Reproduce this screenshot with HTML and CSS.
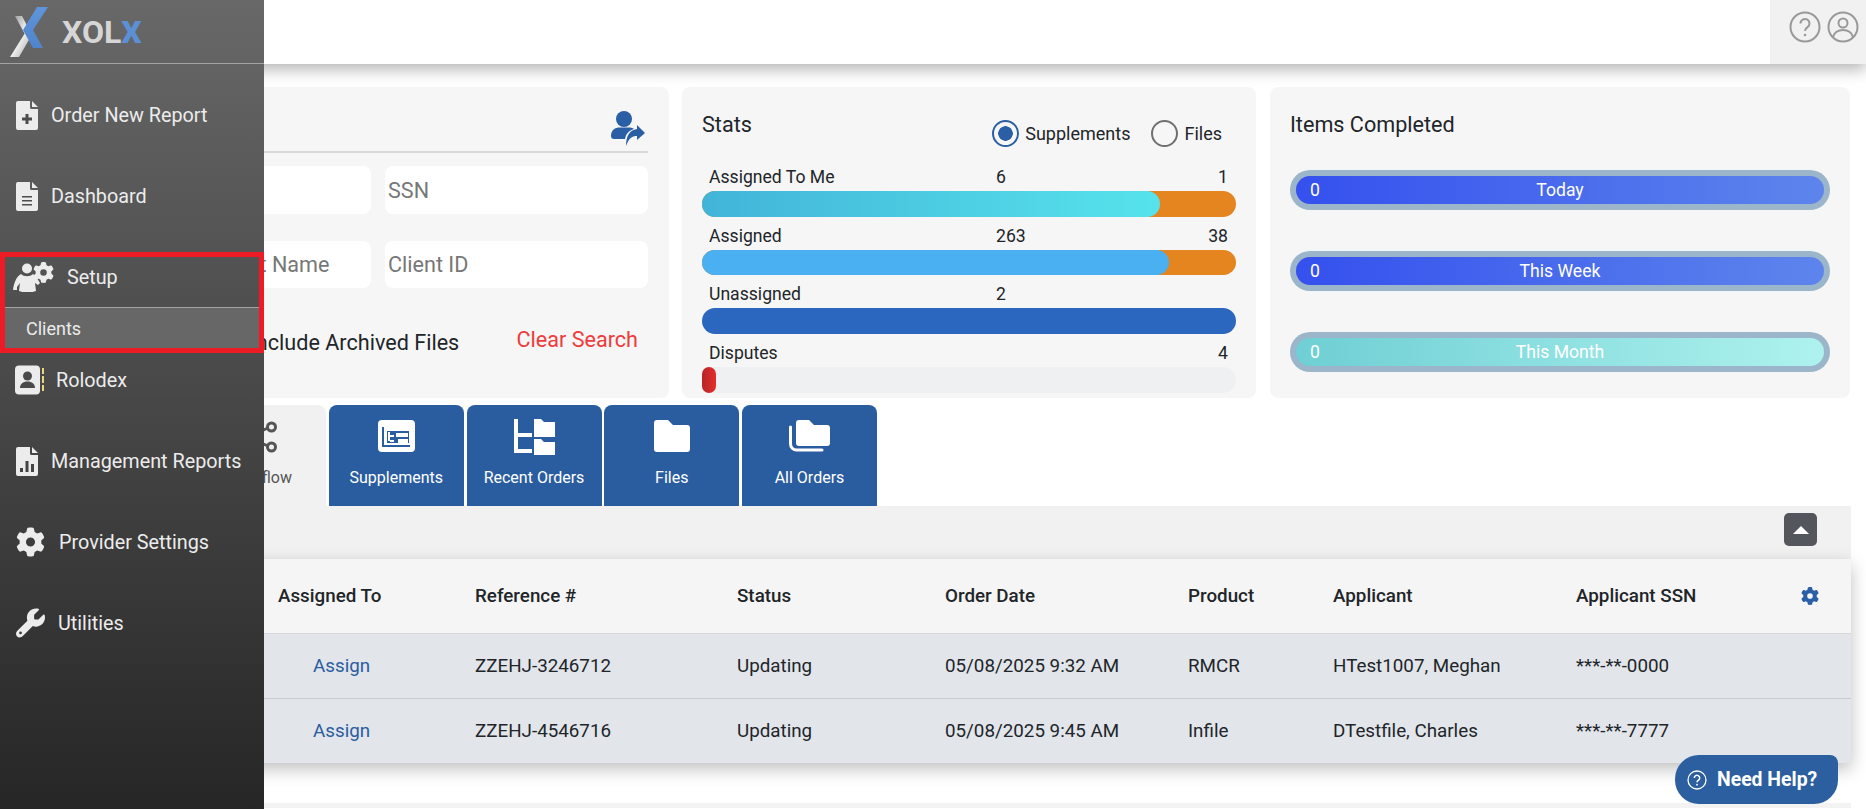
FILE: index.html
```html
<!DOCTYPE html>
<html lang="en">
<head>
<meta charset="utf-8">
<title>XOLX</title>
<link rel="stylesheet" href="styles.css">
</head>
<body>
<svg class="defs" width="0" height="0" aria-hidden="true">
  <defs>
    <symbol id="gear" viewBox="0 0 512 512"><path fill="currentColor" d="M495.9 166.6c3.2 8.7 .5 18.4-6.4 24.6l-43.3 39.4c1.1 8.3 1.7 16.8 1.7 25.4s-.6 17.1-1.7 25.4l43.3 39.4c6.9 6.2 9.6 15.9 6.4 24.6c-4.4 11.9-9.7 23.3-15.8 34.3l-4.7 8.1c-6.6 11-14 21.4-22.1 31.2c-5.9 7.2-15.7 9.6-24.5 6.8l-55.7-17.7c-13.4 10.3-28.2 18.9-44 25.4l-12.5 57.1c-2 9.1-9 16.3-18.2 17.8c-13.8 2.3-28 3.5-42.5 3.5s-28.7-1.2-42.5-3.5c-9.2-1.5-16.2-8.7-18.2-17.8l-12.5-57.1c-15.8-6.5-30.6-15.1-44-25.4L83.1 425.9c-8.8 2.8-18.6 .3-24.5-6.8c-8.1-9.8-15.5-20.2-22.1-31.2l-4.7-8.1c-6.1-11-11.4-22.4-15.8-34.3c-3.2-8.7-.5-18.4 6.4-24.6l43.3-39.4C64.6 273.1 64 264.6 64 256s.6-17.1 1.7-25.4L22.4 191.2c-6.9-6.2-9.6-15.9-6.4-24.6c4.4-11.9 9.7-23.3 15.8-34.3l4.7-8.1c6.6-11 14-21.4 22.1-31.2c5.9-7.2 15.7-9.6 24.5-6.8l55.7 17.7c13.4-10.3 28.2-18.9 44-25.4l12.5-57.1c2-9.1 9-16.3 18.2-17.8C227.3 1.2 241.5 0 256 0s28.7 1.2 42.5 3.5c9.2 1.5 16.2 8.7 18.2 17.8l12.5 57.1c15.8 6.5 30.6 15.1 44 25.4l55.7-17.7c8.8-2.8 18.6-.3 24.5 6.8c8.1 9.8 15.5 20.2 22.1 31.2l4.7 8.1c6.1 11 11.4 22.4 15.8 34.3zM256 336a80 80 0 1 0 0-160 80 80 0 1 0 0 160z"/></symbol>
    <linearGradient id="silver" x1="0" y1="0" x2="1" y2="1"><stop offset="0" stop-color="#8c8c8c"/><stop offset=".5" stop-color="#f2f2f2"/><stop offset="1" stop-color="#9a9a9a"/></linearGradient>
    <linearGradient id="logoblue" x1="0" y1="0" x2="0" y2="1"><stop offset="0" stop-color="#5f95da"/><stop offset="1" stop-color="#4f84cc"/></linearGradient>
  </defs>
</svg>

<aside class="sidebar">
  <div class="brand">
    <svg class="logo" viewBox="0 0 48 54" width="48" height="54">
      <path fill="url(#silver)" d="M14 12h7l11 21-6 1zM24 29l5 5L18 53H9z"/>
      <path fill="url(#logoblue)" d="M36 3h11L32 26l10 18H32L22 26z"/>
    </svg>
    <span class="brand-name">XOL<b>X</b></span>
  </div>
  <nav class="nav">
    <a class="nav-item nav-gap">
      <span class="nav-icon"><svg viewBox="0 0 22 29" width="22" height="29"><path fill="#ececec" d="M2 0h12v6.500a1.500 1.500 0 0 0 1.500 1.500H22v19a2 2 0 0 1-2 2H2a2 2 0 0 1-2-2V2a2 2 0 0 1 2-2zM16 0l6 6h-6z"/><path fill="#4d4d4d" d="M9.500 13h3v3.500H16v3h-3.500V23h-3v-3.500H6v-3h3.500z"/></svg></span>
      <span class="label-order">Order New Report</span>
    </a>
    <a class="nav-item nav-gap">
      <span class="nav-icon"><svg viewBox="0 0 22 29" width="22" height="29"><path fill="#ececec" d="M2 0h12v6.500a1.500 1.500 0 0 0 1.500 1.500H22v19a2 2 0 0 1-2 2H2a2 2 0 0 1-2-2V2a2 2 0 0 1 2-2zM16 0l6 6h-6z"/><path fill="#4d4d4d" d="M6 14h10v1.600H6zM6 18h10v1.600H6zM6 22h10v1.600H6z"/></svg></span>
      <span class="label-order">Dashboard</span>
    </a>
    <div class="nav-group nav-gap-none">
      <a class="nav-item">
        <span class="nav-icon nav-icon-wide"><svg viewBox="0 0 41 30" width="41" height="30"><circle cx="14" cy="6.500" r="5" fill="#ececec"/><path fill="#ececec" d="M0 28c1-8 4-14 8-16 3 3 9 3 12 0 3 2 5 6 7 9l-2 2-3-2 1 8c-5 2-12 2-17 0l1-8-3 4v3z"/><use href="#gear" x="20" y="0" width="21" height="21" class="setup-gear"/></svg></span>
        <span class="label-setup">Setup</span>
      </a>
      <a class="nav-sub">Clients</a>
      <span class="highlight"></span>
    </div>
    <a class="nav-item nav-gap nav-item-after">
      <span class="nav-icon"><svg viewBox="0 0 30 30" width="30" height="30"><rect width="25" height="29" y=".5" rx="4" fill="#ececec"/><path fill="#e8d878" d="M27 3h2v6h-2zM27 11h2v7h-2zM27 20h2v6h-2z"/><circle cx="12.500" cy="11" r="4.500" fill="#4a4a4a"/><path fill="#4a4a4a" d="M5 23c0-4 3-6.500 7.500-6.500S20 19 20 23z"/></svg></span>
      <span class="label-rolodex">Rolodex</span>
    </a>
    <a class="nav-item nav-gap">
      <span class="nav-icon"><svg viewBox="0 0 22 29" width="22" height="29"><path fill="#ececec" d="M2 0h12v6.500a1.500 1.500 0 0 0 1.500 1.500H22v19a2 2 0 0 1-2 2H2a2 2 0 0 1-2-2V2a2 2 0 0 1 2-2zM16 0l6 6h-6z"/><path fill="#444" d="M4 21h3v4H4zM9.500 14h3v11h-3zM15 17h3v8h-3z"/></svg></span>
      <span class="label-order">Management Reports</span>
    </a>
    <a class="nav-item nav-gap">
      <span class="nav-icon nav-icon-gear"><svg width="29" height="30"><use href="#gear" width="29" height="30"/></svg></span>
      <span class="label-provider">Provider Settings</span>
    </a>
    <a class="nav-item">
      <span class="nav-icon"><svg viewBox="0 0 512 512" width="29" height="30"><path fill="#ececec" d="M352 320c88.400 0 160-71.600 160-160c0-15.300-2.200-30.100-6.200-44.200c-3.100-10.800-16.400-13.200-24.300-5.300l-76.800 76.800c-3 3-7.100 4.700-11.300 4.700H336c-8.800 0-16-7.200-16-16V118.600c0-4.200 1.700-8.300 4.700-11.300l76.800-76.800c7.900-7.900 5.400-21.200-5.300-24.300C382.100 2.200 367.300 0 352 0C263.600 0 192 71.600 192 160c0 19.100 3.400 37.500 9.500 54.500L19.900 396.100C7.200 408.800 0 426.100 0 444.100C0 481.600 30.400 512 67.900 512c18 0 35.300-7.200 48-19.900L297.500 310.500c17 6.200 35.400 9.500 54.500 9.500zM80 408a24 24 0 1 1 0 48 24 24 0 1 1 0-48z"/></svg></span>
      <span class="label-utilities">Utilities</span>
    </a>
  </nav>
</aside>

<header class="topbar">
  <div class="top-actions">
    <svg viewBox="0 0 32 32" width="32" height="32"><circle cx="16" cy="16" r="14.500" class="ring"/><path class="ring" d="M11.500 12.500a4.500 4.500 0 1 1 7 3.700c-1.500 1-2.500 1.800-2.500 3.800"/><circle cx="16" cy="24" r="1.300" fill="#999"/></svg>
    <svg viewBox="0 0 32 32" width="32" height="32"><circle cx="16" cy="16" r="14.500" class="ring"/><circle cx="16" cy="12" r="4.500" class="ring"/><path class="ring" d="M6 26c1.500-5 5-7 10-7s8.500 2 10 7"/></svg>
  </div>
</header>

<main class="content">
  <section class="cards">
    <div class="card search-card">
      <div class="search-head">
        <svg viewBox="0 0 34 35" width="34" height="35"><circle cx="13" cy="8" r="8" fill="#2a5fa5"/><path fill="#2a5fa5" d="M0 25c0-6 4-8.500 9-8.500h9c2 0 4 .5 5 1.500-4 1-8 4-9 10H3c-2 0-3-1-3-3z"/><path fill="#2a5fa5" d="M26 14l8 8-8 7v-4c-5 0-8 2-11 10 0-9 3-16 11-17z"/></svg>
      </div>
      <div class="search-fields">
        <div class="field"></div><div class="field"></div><div class="field">SSN</div>
        <div class="field field-short"></div><div class="field field-short">Last Name</div><div class="field field-short">Client ID</div>
      </div>
      <div class="search-foot">
        <span class="archive">Include Archived Files</span>
        <a class="clear">Clear Search</a>
      </div>
    </div>

    <div class="card stats-card">
      <div class="stats-head">
        <h2 class="card-title">Stats</h2>
        <div class="radios">
          <span class="radio radio-on"></span><span class="radio-text">Supplements</span>
          <span class="radio radio-off"></span><span class="radio-text">Files</span>
        </div>
      </div>
      <div class="stat-list">
        <div class="stat">
          <div class="stat-labels"><span>Assigned To Me</span><span>6</span><span>1</span></div>
          <div class="bar bar-orange"><div class="fill fill-cyan" style="width:85.7%"></div></div>
        </div>
        <div class="stat">
          <div class="stat-labels"><span>Assigned</span><span>263</span><span>38</span></div>
          <div class="bar bar-orange"><div class="fill fill-sky" style="width:87.4%"></div></div>
        </div>
        <div class="stat">
          <div class="stat-labels"><span>Unassigned</span><span>2</span><span></span></div>
          <div class="bar"><div class="fill fill-blue" style="width:100%"></div></div>
        </div>
        <div class="stat">
          <div class="stat-labels"><span>Disputes</span><span></span><span>4</span></div>
          <div class="bar"><div class="fill fill-red" style="width:2.6%"></div></div>
        </div>
      </div>
    </div>

    <div class="card items-card">
      <h2 class="card-title">Items Completed</h2>
      <div class="pills">
        <div class="pill"><div class="pill-in pill-blue"><span class="pill-num">0</span><span>Today</span></div></div>
        <div class="pill"><div class="pill-in pill-blue"><span class="pill-num">0</span><span>This Week</span></div></div>
        <div class="pill"><div class="pill-in pill-teal"><span class="pill-num">0</span><span>This Month</span></div></div>
      </div>
    </div>
  </section>

  <section class="tabs">
    <a class="tab tab-active">
      <svg viewBox="0 0 40 34" width="40" height="34"><g fill="none" stroke="#555" stroke-width="3"><circle cx="9" cy="17" r="5"/><circle cx="32.500" cy="7" r="4"/><circle cx="32.500" cy="27" r="4"/><path d="M13 15l16-7M13 19l16 7"/></g></svg>
      <span>Workflow</span>
    </a>
    <a class="tab">
      <svg viewBox="0 0 37 32" width="37" height="32"><rect width="37" height="32" rx="4" fill="#fff"/><path fill="none" stroke="#2a5d9f" stroke-width="2" d="M5 7v19h27"/><rect x="9" y="11" width="22" height="12" fill="#2a5d9f"/><path fill="#fff" d="M10 12h2v9h-2zM12 15h4v2h-4zM12 20h4v2h-4zM18 13h12v4H18zM20 19h10v4H20z"/></svg>
      <span>Supplements</span>
    </a>
    <a class="tab">
      <svg class="tab-tall" viewBox="0 0 41 37" width="41" height="37"><path fill="#fff" d="M0 1h4v14h14v4H4v12h14v4H0zM20 1h7l3 3h11v15H20zM20 21h7l3 3h11v13H20z"/></svg>
      <span>Recent Orders</span>
    </a>
    <a class="tab">
      <svg viewBox="0 0 36 32" width="36" height="32"><path fill="#fff" d="M3 0h11l5 5h14a3 3 0 0 1 3 3v21a3 3 0 0 1-3 3H3a3 3 0 0 1-3-3V3a3 3 0 0 1 3-3z"/></svg>
      <span>Files</span>
    </a>
    <a class="tab">
      <svg viewBox="0 0 41 32" width="41" height="32"><path fill="#fff" d="M10 0h10l5 5h13a3 3 0 0 1 3 3v15a3 3 0 0 1-3 3H10a3 3 0 0 1-3-3V3a3 3 0 0 1 3-3z"/><path fill="none" stroke="#fff" stroke-width="3" stroke-linecap="round" d="M1.500 7v17a6 6 0 0 0 6 6H33"/></svg>
      <span>All Orders</span>
    </a>
  </section>

  <section class="panel">
    <div class="panel-bar"><button class="collapse" type="button"><span class="caret"></span></button></div>
    <table class="orders">
      <colgroup>
        <col class="c0"><col class="c1"><col class="c2"><col class="c3"><col class="c4"><col class="c5"><col class="c6"><col class="c7"><col class="c8">
      </colgroup>
      <thead>
        <tr><th></th><th>Assigned To</th><th>Reference #</th><th>Status</th><th>Order Date</th><th>Product</th><th>Applicant</th><th>Applicant SSN</th><th><svg class="table-gear" width="18" height="18"><use href="#gear" width="18" height="18"/></svg></th></tr>
      </thead>
      <tbody>
        <tr><td></td><td><a class="assign">Assign</a></td><td>ZZEHJ-3246712</td><td>Updating</td><td>05/08/2025 9:32 AM</td><td>RMCR</td><td>HTest1007, Meghan</td><td>***-**-0000</td><td></td></tr>
        <tr><td></td><td><a class="assign">Assign</a></td><td>ZZEHJ-4546716</td><td>Updating</td><td>05/08/2025 9:45 AM</td><td>Infile</td><td>DTestfile, Charles</td><td>***-**-7777</td><td></td></tr>
      </tbody>
    </table>
  </section>
  <div class="next-panel"></div>
</main>

<a class="help">
  <svg viewBox="0 0 20 20" width="20" height="20"><circle cx="10" cy="10" r="9" fill="none" stroke="#fff" stroke-width="1.300"/><path fill="none" stroke="#fff" stroke-width="1.500" d="M7.300 8a2.700 2.700 0 1 1 4.200 2.200c-.9.6-1.500 1-1.500 2"/><circle cx="10" cy="14.700" r=".9" fill="#fff"/></svg>
  <span>Need Help?</span>
</a>
</body>
</html>
```
FILE: styles.css
```css
* { box-sizing: border-box; }
html, body { height: 100%; }
body {
  margin: 0;
  overflow: hidden;
  background: #fff;
  font-family: Roboto, "Liberation Sans", sans-serif;
  color: #212529;
}
.defs { position: absolute; }
a { text-decoration: none; color: inherit; }

/* Sidebar */
.sidebar {
  position: fixed;
  z-index: 5;
  left: 0; top: 0; bottom: 0;
  width: 264px;
  background: linear-gradient(180deg, #686868 0%, #262626 100%);
  color: #ececec;
}
.brand {
  height: 64px;
  display: flex;
  align-items: center;
  padding-left: 1px;
  border-bottom: 1px solid #a3a3a3;
}
.logo { flex: none; margin-top: -1px; }
.brand-name {
  margin-left: 13px;
  margin-top: 1px;
  font-size: 32px;
  font-weight: 700;
  color: #d6d6d6;
}
.brand-name b { color: #5b8fd6; }
.nav { display: flex; flex-direction: column; padding-top: 20px; }
.nav-item {
  position: relative;
  height: 62px;
  display: flex;
  align-items: center;
  font-size: 19.800px;
  padding-left: 16px;
}
.nav-gap { margin-bottom: 19px; }
.nav-icon { display: flex; flex: none; color: #ececec; }
.nav-icon svg { display: block; }
.label-order { margin-left: 13px; }
.label-setup { margin-left: 13px; }
.label-rolodex { margin-left: 11px; }
.label-provider { margin-left: 14px; }
.label-utilities { margin-left: 13px; }
.nav-icon-wide { margin-left: -3px; }
.nav-item-after { margin-left: -1px; }
.setup-gear { color: #ececec; }
.nav-group { position: relative; }
.nav-sub {
  display: flex;
  align-items: center;
  height: 42px;
  margin-top: -1px;
  padding-left: 26px;
  font-size: 18px;
  background: #676767;
  border-top: 1px solid #a3a3a3;
}
.highlight {
  position: absolute;
  left: 0; right: 0;
  top: 6px; bottom: -4px;
  border: 5px solid #ed1c24;
  pointer-events: none;
}

/* Top bar */
.topbar {
  position: relative;
  z-index: 2;
  height: 64px;
  display: flex;
  justify-content: flex-end;
  background: #fff;
  box-shadow: 0 6px 14px rgba(0, 0, 0, .28);
}
.top-actions {
  width: 96px;
  display: flex;
  align-items: center;
  gap: 6px;
  padding: 0 0 11px 19px;
  background: #f1f1f1;
}
.ring { fill: none; stroke: #999; stroke-width: 2; }

/* Content */
.content { padding: 23px 15px 0 12px; }
.cards {
  display: grid;
  grid-template-columns: 657px 574px 581px;
  column-gap: 13px;
}
.cards .items-card { margin-left: 1px; }
.card {
  height: 311px;
  background: #f6f6f6;
  border-radius: 8px;
}
.card-title {
  margin: 0;
  font-size: 21.600px;
  font-weight: 400;
  line-height: 28px;
}

.search-card { padding: 0 21px 0 20px; }
.search-head {
  height: 66px;
  display: flex;
  justify-content: flex-end;
  padding: 24px 3px 0 0;
  border-bottom: 2px solid #d8d8d8;
}
.search-fields {
  display: grid;
  grid-template-columns: 1fr 149px 263px;
  grid-auto-rows: 48px;
  column-gap: 14px;
  row-gap: 27px;
  margin-top: 13px;
}
.field {
  display: flex;
  align-items: center;
  padding-left: 3px;
  background: #fff;
  border-radius: 8px;
  font-size: 21.600px;
  color: #777;
}
.field-short { height: 47px; }
.search-foot {
  display: flex;
  align-items: center;
  justify-content: space-between;
  padding: 0 10px 0 218px;
  margin-top: 38px;
  height: 30px;
  font-size: 21.600px;
}
.clear { color: #ef3b3b; margin-top: -6px; }
.archive { color: #212529; }

.stats-card { padding: 0 20px; }
.stats-head {
  height: 80px;
  display: flex;
  justify-content: space-between;
  padding-top: 24px;
}
.radios {
  display: flex;
  align-items: center;
  height: 27px;
  margin-top: 9px;
  margin-right: 14px;
  font-size: 18px;
}
.radio {
  width: 27px; height: 27px;
  border-radius: 50%;
  flex: none;
  border: 2px solid #6f6f6f;
}
.radio-on {
  border-color: #2a5fa5;
  background: radial-gradient(circle, #2a5fa5 0 7px, transparent 7.500px);
}
.radio-off { margin-left: 21px; }
.radio-text { margin-left: 6px; }
.stat-list { display: flex; flex-direction: column; gap: 9px; }
.stat-labels {
  display: grid;
  grid-template-columns: 287px 1fr auto;
  height: 24px;
  line-height: 21px;
  padding: 0 8px 0 7px;
  font-size: 17.600px;
}
.bar {
  position: relative;
  height: 25.700px;
  border-radius: 13px;
  background: #eef0f1;
}
.bar-orange { background: #e5851f; }
.fill { height: 100%; border-radius: 13px; }
.fill-cyan { background: linear-gradient(90deg, #42b4d8, #56e3ec); }
.fill-sky { background: #4ab0f2; }
.fill-blue { background: #2b67bf; }
.fill-red { background: linear-gradient(90deg, #b52626, #e52c2c); border-radius: 7px; }

.items-card { padding: 24px 20px 0; }
.pills { display: flex; flex-direction: column; gap: 41px; margin-top: 31px; }
.pill {
  height: 40px;
  padding: 6px;
  border-radius: 20px;
  background: #9bb6ca;
}
.pill-in {
  display: grid;
  grid-template-columns: 1fr auto 1fr;
  align-items: center;
  height: 28px;
  border-radius: 14px;
  color: #fff;
  font-size: 17.600px;
}
.pill-num { padding-left: 14px; }
.pill-blue { background: linear-gradient(90deg, #3550ee, #5d85ec); }
.pill-teal { background: linear-gradient(90deg, #6fcfd4, #aef2ee); }

/* Tabs */
.tabs {
  display: flex;
  gap: 2.750px;
  margin-top: 7px;
  padding-left: 179px;
}
.tab {
  width: 135px;
  height: 101px;
  display: grid;
  grid-template-rows: 37px auto;
  justify-items: center;
  align-content: start;
  border-radius: 8px 8px 0 0;
  background: #2a5d9f;
  color: #fff;
  font-size: 16px;
  padding-top: 15px;
}
.tab svg { align-self: start; }
.tab .tab-tall { margin-top: -2px; }
.tab span { margin-top: 11px; }
.tab-active { background: #f1f1f1; color: #555; }

/* Panel */
.panel-bar {
  height: 53px;
  display: flex;
  justify-content: flex-end;
  padding: 7px 34px 0 0;
  background: #f1f1f1;
}
.collapse {
  width: 33px; height: 33px;
  padding: 0;
  border: 0;
  border-radius: 5px;
  background: #54565e;
  display: flex;
  align-items: center;
  justify-content: center;
}
.caret {
  width: 0; height: 0;
  border-left: 8px solid transparent;
  border-right: 8px solid transparent;
  border-bottom: 8px solid #fff;
}
.orders {
  width: 100%;
  table-layout: fixed;
  border-collapse: collapse;
  box-shadow: 0 6px 16px rgba(0, 0, 0, .25);
  font-size: 18.800px;
}
.c0 { width: 266px; } .c1 { width: 197px; } .c2 { width: 262px; }
.c3 { width: 208px; } .c4 { width: 243px; } .c5 { width: 145px; }
.c6 { width: 243px; } .c7 { width: 214px; } .c8 { width: 61px; }
.orders th {
  height: 74px;
  padding: 0;
  text-align: left;
  font-weight: 500;
  background: #f5f5f5;
  border-bottom: 1px solid #d6d8dc;
}
.orders td {
  height: 65px;
  padding: 0;
  background: #e2e5ea;
  border-bottom: 1px solid #c8cbd0;
}
.orders tr:last-child td { border-bottom: 0; }
.assign { margin-left: 35px; color: #2a5d9f; }
.table-gear { display: block; margin-left: 11px; color: #2a5fa5; }
.next-panel { height: 5px; margin-top: 40px; background: #f3f3f3; }

/* Help */
.help {
  position: fixed;
  z-index: 6;
  left: 1675px;
  top: 755px;
  width: 163px;
  height: 49px;
  display: flex;
  align-items: center;
  gap: 10px;
  padding-left: 12px;
  border-radius: 24px 8px 24px 24px;
  background: #2c5f9f;
  color: #fff;
  font-size: 19.400px;
  font-weight: 700;
}
.help svg { flex: none; }
```
